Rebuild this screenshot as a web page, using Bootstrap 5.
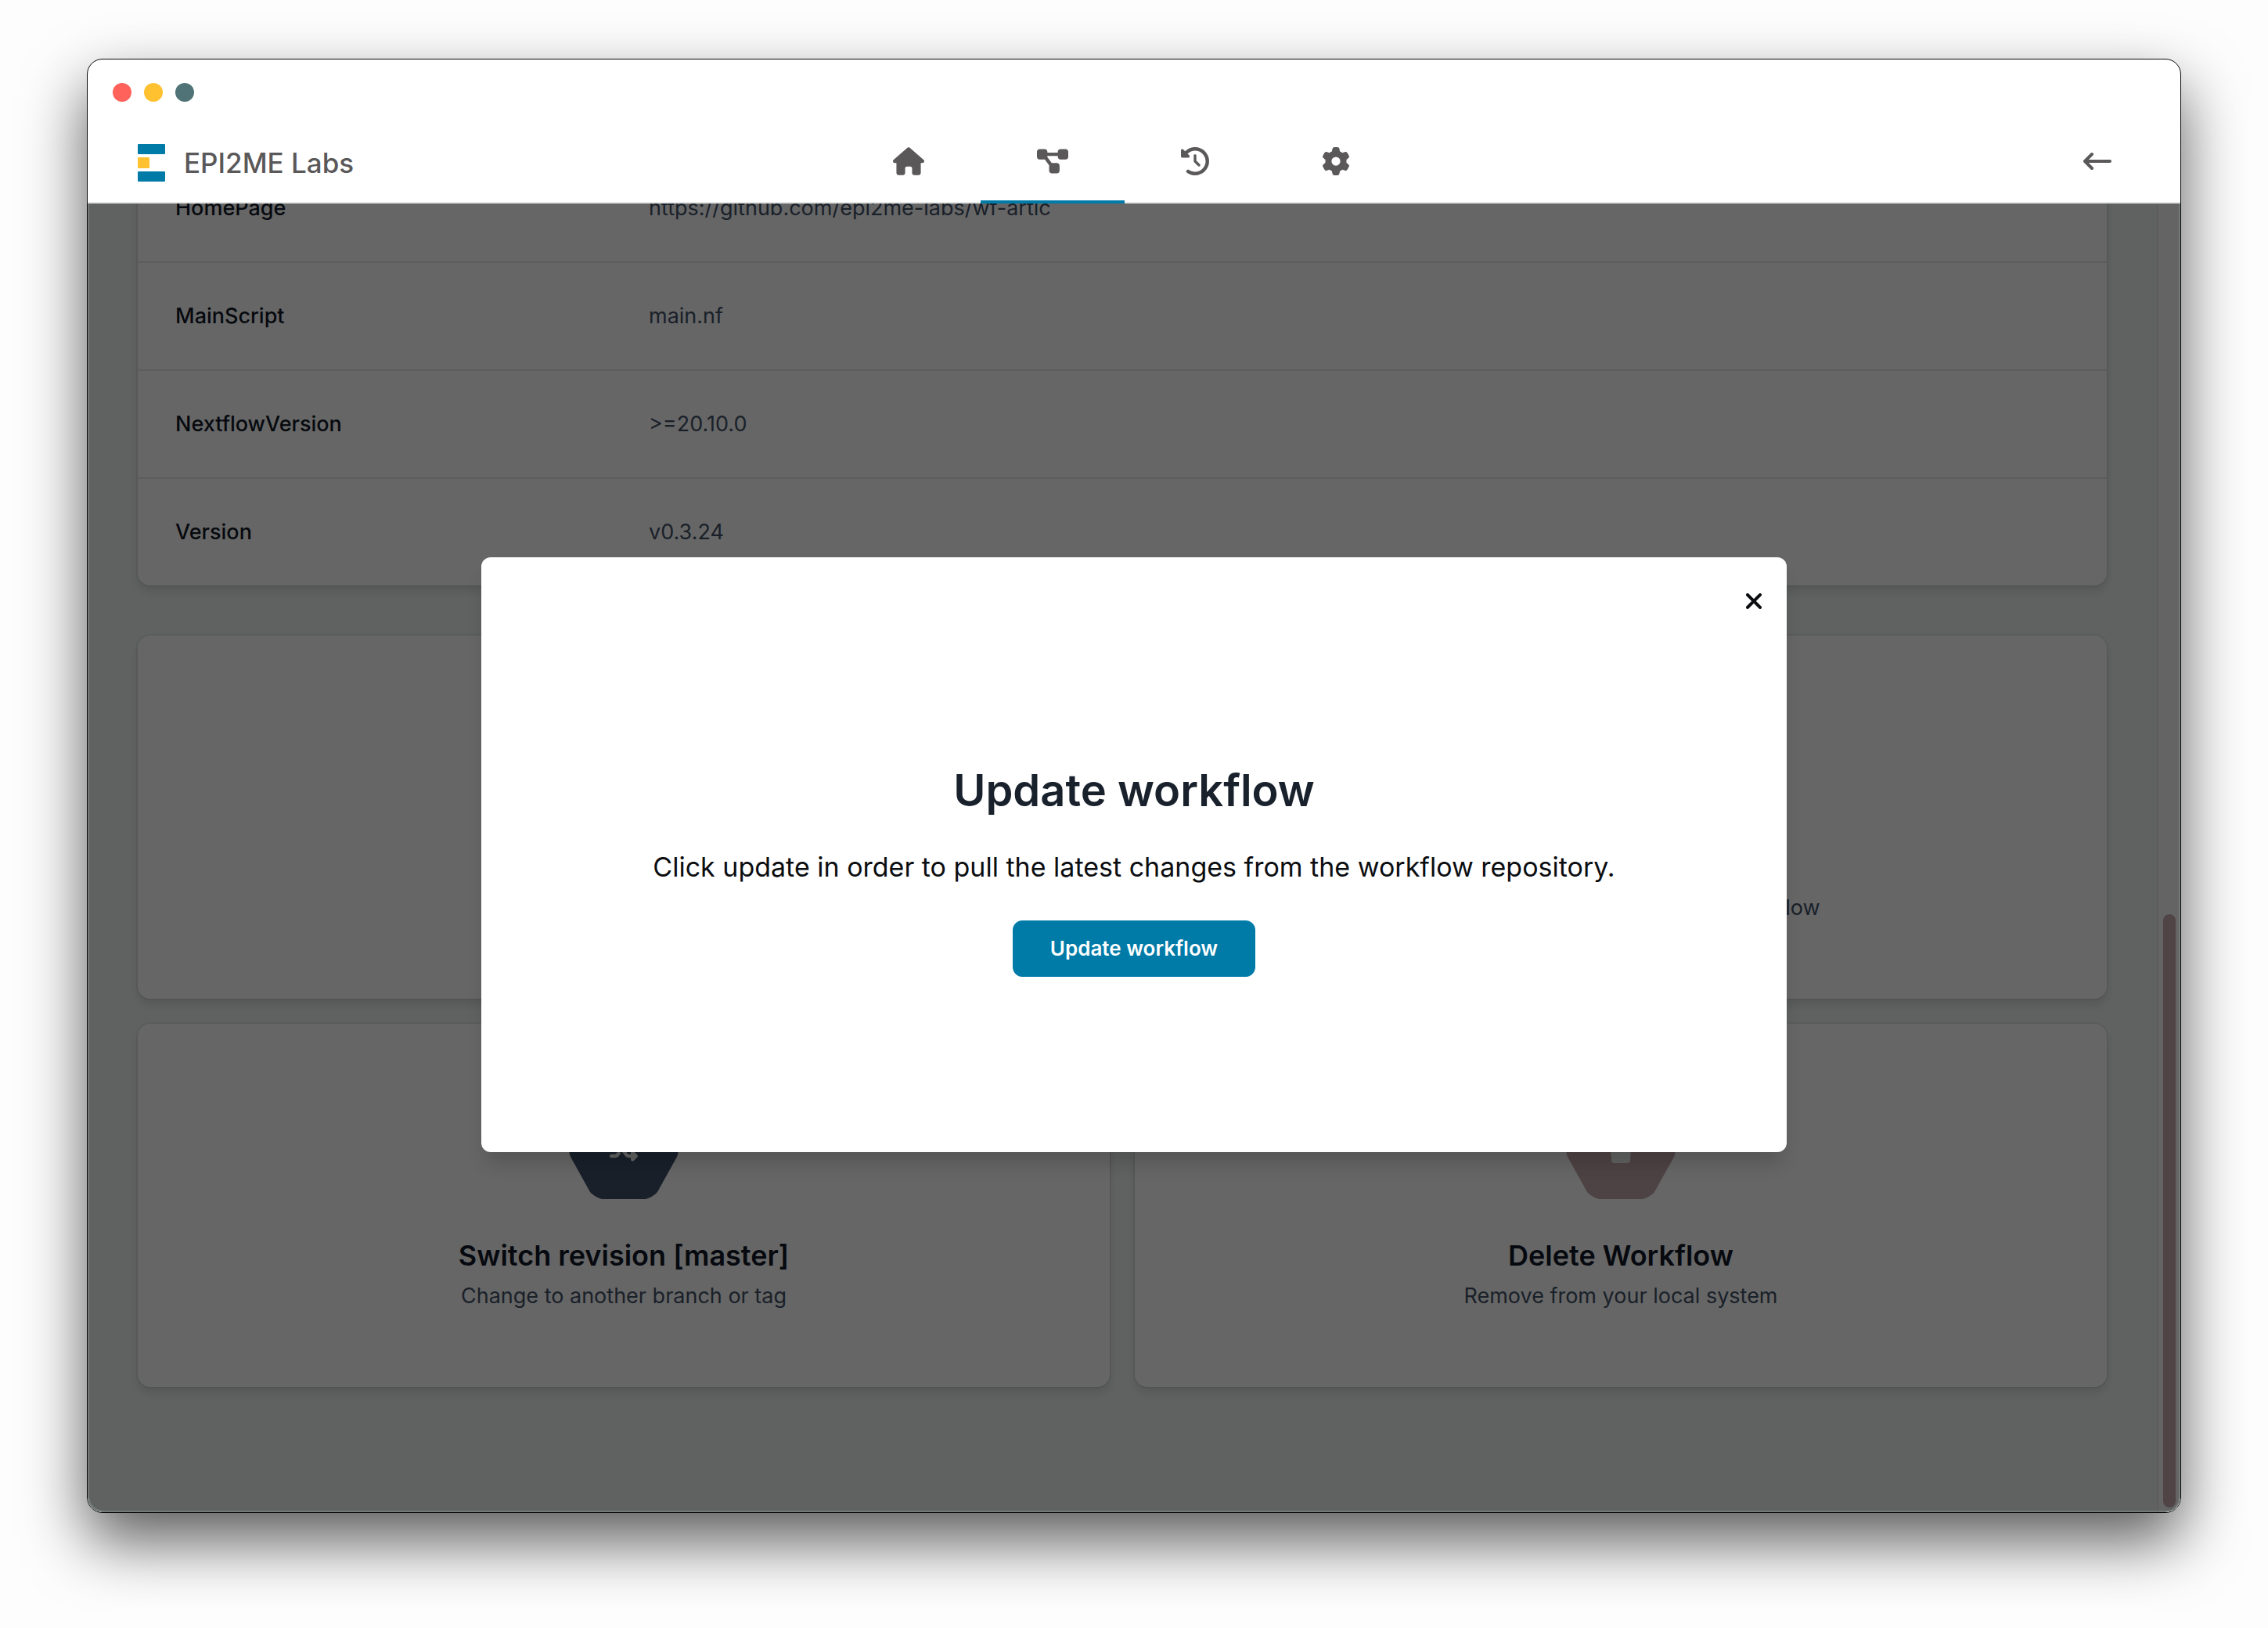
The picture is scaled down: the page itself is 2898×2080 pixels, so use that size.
<!DOCTYPE html>
<html lang="en">
<head>
<meta charset="utf-8">
<meta name="viewport" content="width=device-width, initial-scale=1">
<title>EPI2ME Labs</title>
<link href="https://cdn.jsdelivr.net/npm/bootstrap@5.3.0/dist/css/bootstrap.min.css" rel="stylesheet">
<style>
  body { font-family: Inter, "Open Sans", sans-serif; background: #fdfdfd; padding: 75px 111px 147px; }
  svg { display: block; fill: currentColor; }
  .app-window { border: 1px solid #05080a; border-radius: 20px; background: #fff; box-shadow: 0 36px 80px rgba(0,0,0,.64); }
  .lights { padding: 30px 32px 0; gap: 16px; }
  .light { width: 24px; height: 24px; border-radius: 50%; }
  .light-close { background: #ff625b; }
  .light-min { background: #ffc130; }
  .light-zoom { background: #4f7377; }
  .app-header { border-bottom: 2px solid #e5e7e5; height: 184px; color: #5a5859; }
  .header-bar { display: grid; grid-template-columns: 1fr auto 1fr; padding: 0 64px; margin-bottom: -2px; }
  .brand { gap: 24px; padding-top: 4px; font-size: 35px; line-height: 44px; font-weight: 500; }
  .main-nav { margin-right: 32px; }
  .main-nav .nav-link { padding: 4px 72px 0; height: 108px; border-bottom: 4px solid transparent; color: inherit; display: flex; align-items: center; }
  .main-nav .nav-link.active { border-color: #007ba8; }
  .back-btn { padding: 24px; border: 0; color: inherit; }
  .page-area { background: #f0f5f2; border-radius: 0 0 19px 19px; }
  .page-scroll { padding: 0 64px 160px; }
  .track { width: 30px; background: #fafafa; border-left: 2px solid #e8e8e8; padding-bottom: 6px; }
  .thumb { width: 16px; height: 45.5%; border-radius: 8px; background: #c9abae; }
  .panel { border: 0; border-radius: 16px; background: #fff; box-shadow: 0 0 0 2px rgba(0,0,0,.05), 0 8px 12px 0 rgba(0,0,0,.1); }
  .details { margin-bottom: 64px; font-size: 27px; line-height: 40px; }
  .details-line { padding: 48px; border-bottom: 2px solid #e6e6e6; --bs-gutter-x: 0; }
  .details-line:last-child { border-bottom: 0; }
  .details-line dt { font-weight: 500; color: #111827; }
  .details-line dd { color: #435268; }
  .tiles { --bs-gutter-x: 32px; --bs-gutter-y: 32px; }
  .tile { height: 464px; padding-top: 8px; text-decoration: none; }
  .hexagon { width: 140px; height: 120px; margin-bottom: 48px; }
  .hex-navy { color: #40526a; }
  .hex-blue { color: #007ba8; }
  .hex-rose { color: #c4a7aa; }
  .hex-glyph { color: #f0f5f2; }
  .tile-title { font-size: 36px; line-height: 48px; font-weight: 600; color: #111827; margin: 0; }
  .tile-text { font-size: 27px; line-height: 40px; color: #435268; margin: 8px 0 0; }
  .shade { background: rgba(0,0,0,.6); box-shadow: inset 2px -2px rgba(160,180,170,.3), inset -2px 0 rgba(160,180,170,.3); border-radius: inherit; padding-bottom: 8px; z-index: 2; }
  .dialog-box { width: 62.4%; height: 760px; padding-top: 38px; border: 0; border-radius: 12px; background: #fff; box-shadow: 0 20px 24px -6px rgba(0,0,0,.16); color: #0b0d10; }
  .dialog-close { position: absolute; top: 30px; right: 16px; padding: 16px; border: 0; line-height: 0; }
  .dialog-title { font-size: 56px; line-height: 72px; font-weight: 600; color: #18212c; margin: 0 0 38px; }
  .dialog-text { font-size: 34px; line-height: 48px; margin: 0 0 44px; }
  .update-btn { --bs-btn-bg: #007ba8; --bs-btn-border-color: #007ba8; --bs-btn-color: #fff; width: 310px; height: 72px; border-radius: 12px; font-size: 26px; line-height: 40px; font-weight: 600; }
</style>
<script src="https://cdn.jsdelivr.net/npm/bootstrap@5.3.0/dist/js/bootstrap.bundle.min.js"></script>
</head>
<body class="d-flex vh-100">
<div class="app-window d-flex flex-column flex-fill">
  <header class="app-header d-flex flex-column justify-content-between flex-shrink-0">
    <div class="lights d-flex">
      <span class="light light-close"></span><span class="light light-min"></span><span class="light light-zoom"></span>
    </div>
    <div class="header-bar align-items-center">
      <a href="#" class="brand d-flex align-items-center text-reset text-decoration-none">
        <svg width="35" height="48" viewBox="0 0 35 48" aria-hidden="true"><rect width="35" height="13" rx="1" fill="#007ba8"/><rect y="17" width="15" height="14" rx="1" fill="#ffc130"/><rect y="35" width="35" height="13" rx="1" fill="#007ba8"/></svg>
        <span>EPI2ME Labs</span>
      </a>
      <nav class="main-nav nav">
        <a class="nav-link" href="#" aria-label="Home"><svg width="40" height="36" viewBox="0 0 576 512"><path d="M575.8 255.5c0 18-15 32.1-32 32.1h-32l.7 160.2c0 2.7-.2 5.4-.5 8.1V472c0 22.1-17.9 40-40 40H392c-22.1 0-40-17.9-40-40V384c0-17.7-14.3-32-32-32H256c-17.7 0-32 14.3-32 32v88c0 22.1-17.9 40-40 40H104c-22.1 0-40-17.9-40-40V287.6H32c-18 0-32-14-32-32.1c0-9 3-17 10-24L266.4 8c7-7 15-8 22-8s15 2 21 7L564.8 231.5c8 7 12 15 11 24z"/></svg></a>
        <a class="nav-link active" href="#" aria-label="Workflows"><svg width="40" height="36" viewBox="0 0 576 512"><path d="M0 80C0 53.500 21.500 32 48 32h96c26.500 0 48 21.500 48 48V96H384V80c0-26.500 21.500-48 48-48h96c26.500 0 48 21.500 48 48v96c0 26.500-21.500 48-48 48H432c-26.500 0-48-21.500-48-48V160H192v16c0 1.700-.1 3.400-.3 5L272 288h96c26.500 0 48 21.500 48 48v96c0 26.500-21.500 48-48 48H272c-26.500 0-48-21.500-48-48V336c0-1.700.1-3.400.3-5L144 224H48c-26.500 0-48-21.500-48-48V80z"/></svg></a>
        <a class="nav-link" href="#" aria-label="History"><svg width="36" height="36" viewBox="0 0 512 512"><path d="M75 75L41 41C25.900 25.900 0 36.600 0 57.900V168c0 13.300 10.700 24 24 24H134.100c21.400 0 32.100-25.900 17-41l-30.800-30.800C155 85.500 203 64 256 64c106 0 192 86 192 192s-86 192-192 192c-40.800 0-78.600-12.700-109.700-34.400c-14.500-10.100-34.400-6.600-44.600 7.900s-6.600 34.400 7.900 44.600C151.200 495 201.700 512 256 512c141.400 0 256-114.600 256-256S397.400 0 256 0C185.300 0 121.300 28.700 75 75zm181 53c-13.300 0-24 10.700-24 24V256c0 6.400 2.500 12.500 7 17l72 72c9.400 9.400 24.600 9.400 33.900 0s9.400-24.600 0-33.900l-65-65V152c0-13.300-10.700-24-24-24z"/></svg></a>
        <a class="nav-link" href="#" aria-label="Settings"><svg width="36" height="36" viewBox="0 0 512 512"><path d="M495.9 166.6c3.2 8.7 .5 18.4-6.4 24.6l-43.3 39.4c1.1 8.3 1.7 16.8 1.7 25.4s-.6 17.1-1.7 25.4l43.3 39.4c6.9 6.2 9.6 15.9 6.4 24.6c-4.4 11.9-9.7 23.3-15.8 34.3l-4.7 8.1c-6.6 11-14 21.4-22.1 31.2c-5.9 7.2-15.7 9.6-24.5 6.8l-55.7-17.7c-13.4 10.3-28.2 18.9-44 25.4l-12.5 57.1c-2 9.1-9 16.3-18.2 17.8c-13.8 2.3-28 3.5-42.5 3.5s-28.700-1.200-42.500-3.500c-9.200-1.500-16.200-8.700-18.200-17.800l-12.500-57.100c-15.800-6.500-30.600-15.100-44-25.400L83.100 425.900c-8.800 2.800-18.600 .3-24.500-6.800c-8.100-9.800-15.500-20.200-22.100-31.200l-4.700-8.100c-6.100-11-11.400-22.400-15.800-34.300c-3.200-8.700-.5-18.400 6.400-24.600l43.300-39.400C64.600 273.100 64 264.600 64 256s.6-17.100 1.700-25.400L22.400 191.200c-6.900-6.200-9.600-15.900-6.400-24.600c4.400-11.900 9.700-23.300 15.800-34.300l4.700-8.100c6.600-11 14-21.400 22.100-31.200c5.900-7.200 15.700-9.600 24.500-6.800l55.700 17.700c13.400-10.300 28.200-18.900 44-25.400l12.500-57.100c2-9.100 9-16.300 18.200-17.800C227.300 1.200 241.500 0 256 0s28.700 1.200 42.500 3.500c9.200 1.500 16.200 8.700 18.200 17.800l12.500 57.100c15.800 6.500 30.600 15.100 44 25.400l55.700-17.700c8.800-2.800 18.600-.3 24.500 6.800c8.100 9.800 15.500 20.200 22.100 31.200l4.700 8.100c6.100 11 11.400 22.400 15.800 34.300zM256 336a80 80 0 1 0 0-160 80 80 0 1 0 0 160z"/></svg></a>
      </nav>
      <button type="button" class="back-btn btn ms-auto" aria-label="Back"><svg width="36" height="24" viewBox="0 0 36 24"><path d="M11 3L2 12l9 9M2 12h32" fill="none" stroke="currentColor" stroke-width="4" stroke-linecap="round" stroke-linejoin="round"/></svg></button>
    </div>
  </header>

  <div class="page-area position-relative d-flex flex-fill overflow-hidden">
    <main class="page-scroll flex-fill d-flex flex-column justify-content-end">
      <dl class="panel details flex-shrink-0">
        <div class="details-line row"><dt class="col-3">HomePage</dt><dd class="col-9 mb-0">https://github.com/epi2me-labs/wf-artic</dd></div>
        <div class="details-line row"><dt class="col-3">MainScript</dt><dd class="col-9 mb-0">main.nf</dd></div>
        <div class="details-line row"><dt class="col-3">NextflowVersion</dt><dd class="col-9 mb-0">&gt;=20.10.0</dd></div>
        <div class="details-line row"><dt class="col-3">Version</dt><dd class="col-9 mb-0">v0.3.24</dd></div>
      </dl>
      <div class="tiles row flex-shrink-0 mt-0">
        <div class="col-6 mt-0"><a href="#" class="panel tile d-flex flex-column align-items-center justify-content-center">
          <svg class="hexagon hex-blue" viewBox="0 0 140 120"><path d="M42 0H98Q108 3 113 9L138 54Q141 60 138 66L113 111Q108 117 98 120H42Q32 117 27 111L2 66Q-1 60 2 54L27 9Q32 3 42 0Z"/><path class="hex-glyph" fill="currentColor" d="M58 38L86 56L58 74Z"/></svg>
          <h2 class="tile-title">Run workflow</h2><p class="tile-text">Start a new analysis</p></a></div>
        <div class="col-6 mt-0"><a href="#" class="panel tile d-flex flex-column align-items-center justify-content-center">
          <svg class="hexagon hex-blue" viewBox="0 0 140 120"><path d="M42 0H98Q108 3 113 9L138 54Q141 60 138 66L113 111Q108 117 98 120H42Q32 117 27 111L2 66Q-1 60 2 54L27 9Q32 3 42 0Z"/><path class="hex-glyph" fill="currentColor" d="M66 38h8v20h10L70 74L56 58h10Z"/></svg>
          <h2 class="tile-title">Update workflow</h2><p class="tile-text">Pull the latest changes for this workflow</p></a></div>
        <div class="col-6"><a href="#" class="panel tile d-flex flex-column align-items-center justify-content-center">
          <svg class="hexagon hex-navy" viewBox="0 0 140 120"><path d="M42 0H98Q108 3 113 9L138 54Q141 60 138 66L113 111Q108 117 98 120H42Q32 117 27 111L2 66Q-1 60 2 54L27 9Q32 3 42 0Z"/><svg class="hex-glyph" x="52" y="38" width="36" height="36" viewBox="0 0 512 512"><path d="M403.8 34.4c12-5 25.7-2.2 34.9 6.9l64 64c6 6 9.4 14.1 9.4 22.6s-3.4 16.6-9.4 22.6l-64 64c-9.2 9.2-22.9 11.9-34.9 6.9s-19.8-16.6-19.8-29.6V160H352c-10.1 0-19.6 4.7-25.6 12.8L284 229.3 244 176l31.2-41.6C293.3 110.2 321.8 96 352 96h32V64c0-12.9 7.8-24.6 19.8-29.6zM164 282.7L204 336l-31.2 41.6C154.7 401.8 126.2 416 96 416H32c-17.7 0-32-14.3-32-32s14.3-32 32-32H96c10.1 0 19.6-4.7 25.6-12.8L164 282.7zm274.6 188c-9.2 9.2-22.9 11.9-34.9 6.9s-19.8-16.6-19.8-29.6V416H352c-30.2 0-58.7-14.2-76.8-38.4L121.6 172.8c-6-8.1-15.5-12.8-25.6-12.8H32c-17.7 0-32-14.3-32-32S14.3 96 32 96H96c30.2 0 58.7 14.2 76.8 38.4L326.4 339.2c6 8.1 15.5 12.8 25.6 12.8h32V320c0-12.9 7.8-24.6 19.8-29.6s25.7-2.2 34.9 6.9l64 64c6 6 9.4 14.1 9.4 22.6s-3.4 16.6-9.4 22.6l-64 64z"/></svg></svg>
          <h2 class="tile-title">Switch revision [master]</h2><p class="tile-text">Change to another branch or tag</p></a></div>
        <div class="col-6"><a href="#" class="panel tile d-flex flex-column align-items-center justify-content-center">
          <svg class="hexagon hex-rose" viewBox="0 0 140 120"><path d="M42 0H98Q108 3 113 9L138 54Q141 60 138 66L113 111Q108 117 98 120H42Q32 117 27 111L2 66Q-1 60 2 54L27 9Q32 3 42 0Z"/><svg class="hex-glyph" x="54" y="38" width="32" height="36" viewBox="0 0 448 512"><path d="M135.200 17.700L128 32H32C14.300 32 0 46.300 0 64S14.300 96 32 96H416c17.700 0 32-14.300 32-32s-14.300-32-32-32H320l-7.200-14.300C307.400 6.800 296.300 0 284.200 0H163.800c-12.100 0-23.200 6.800-28.600 17.700zM416 128H32L53.200 467c1.600 25.300 22.600 45 47.900 45H346.900c25.300 0 46.300-19.700 47.900-45L416 128z"/></svg></svg>
          <h2 class="tile-title">Delete Workflow</h2><p class="tile-text">Remove from your local system</p></a></div>
      </div>
    </main>
    <div class="track d-flex align-items-end justify-content-center flex-shrink-0"><div class="thumb"></div></div>

    <div class="shade position-absolute top-0 start-0 w-100 h-100 d-flex align-items-center justify-content-center">
      <section class="dialog-box modal-content position-relative align-items-center justify-content-center text-center" role="dialog" aria-modal="true" aria-labelledby="dlg-title">
        <button type="button" class="dialog-close btn text-reset" aria-label="Close"><svg width="20" height="20" viewBox="0 0 20 20"><path d="M2 2L18 18M18 2L2 18" fill="none" stroke="currentColor" stroke-width="4" stroke-linecap="round"/></svg></button>
        <h1 class="dialog-title" id="dlg-title">Update workflow</h1>
        <p class="dialog-text">Click update in order to pull the latest changes from the workflow repository.</p>
        <button type="button" class="update-btn btn">Update workflow</button>
      </section>
    </div>
  </div>
</div>
</body>
</html>
